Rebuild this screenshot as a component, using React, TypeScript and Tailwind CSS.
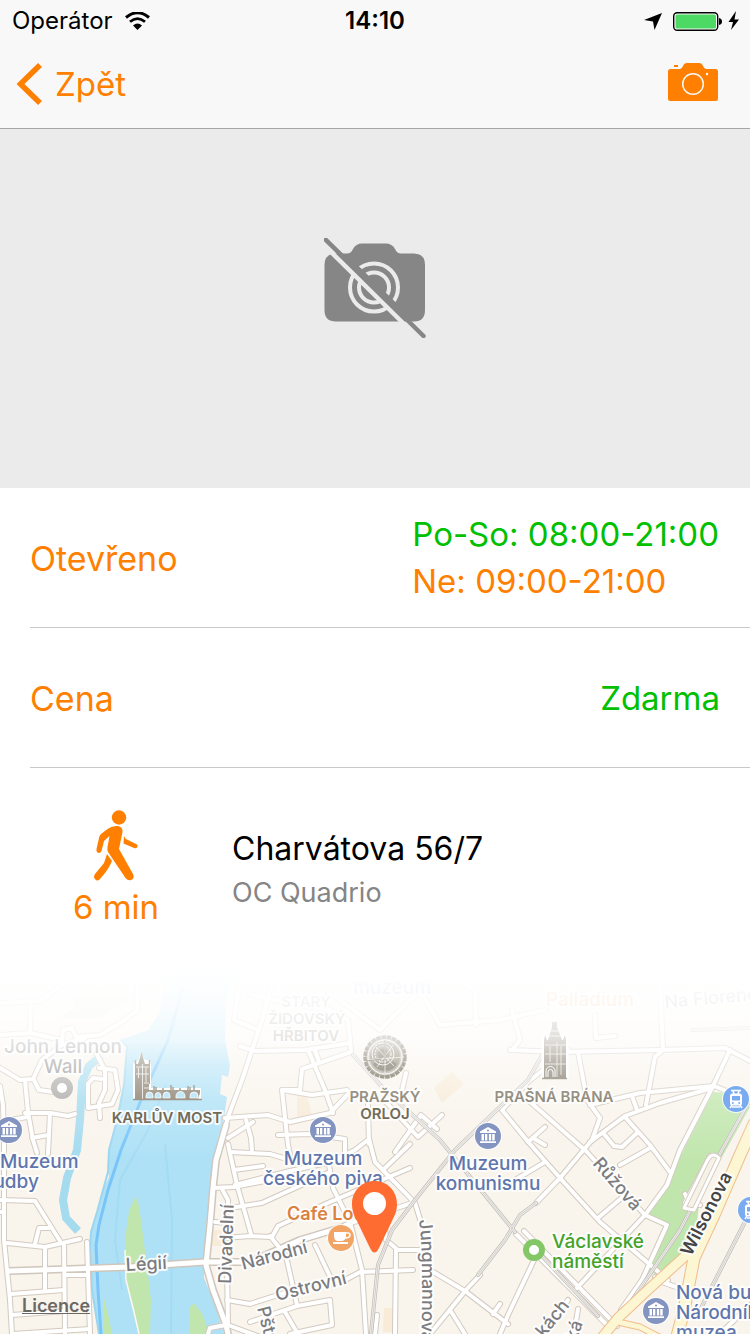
import React from "react";

const minorRoads = [
  "M0 1068 L20 1080 L33 1079 L42 1060 L62 1045 L85 1038",
  "M25 1080 L28 1112 L33 1140 L37 1153",
  "M25 1113 L50 1113 L68 1116 L75 1114",
  "M50 1113 L48 1154",
  "M32 1138 L48 1135",
  "M0 1122 L27 1117",
  "M34 1080 L39 1090 L53 1092",
  "M0 1086 L3 1105 L4 1144 L4 1240 L10 1300 L12 1334",
  "M96 1053 L105 1070 L105 1090 L99 1103 L100 1118",
  "M99 1068 L115 1070 L118 1090 L112 1104 L88 1108 L88 1084 L93 1078 L102 1079",
  "M62 1045 L63 1030 L72 1028 L76 1037 L100 1035 L125 1020 L137 1010 L138 982",
  "M0 1035 L30 1033 L62 1040",
  "M0 1003 L40 1001 L66 982",
  "M31 1002 L30 1033",
  "M0 1200 L35 1201 L60 1241",
  "M35 1244 L39 1228 L50 1228",
  "M7 1243 L45 1247 L80 1239",
  "M45 1247 L45 1290",
  "M64 1243 L65 1334",
  "M87 1242 L90 1334",
  "M11 1294 L64 1290",
  "M12 1315 L65 1311",
  "M65 1275 L88 1275",
  "M12 1334 L90 1329",
  "M0 1212 L4 1212",
  "M228 1144 L237 1185 L251 1234",
  "M213 1188 L234 1187 L270 1180",
  "M222 1189 L228 1200 L228 1212",
  "M230 1152 L270 1154 L290 1160",
  "M234 1170 L263 1166",
  "M215 1222 L230 1223",
  "M225 1238 L250 1236 L272 1237 L278 1226 L330 1202 L410 1168",
  "M227 1265 L228 1325 L260 1337",
  "M227 1300 L250 1304 L300 1288",
  "M208 1334 L210 1328 L226 1325",
  "M272 982 L262 1020 L252 1050 L242 1080 L228 1117 L218 1155",
  "M240 1046 L254 1051 L305 1050 L350 1043",
  "M351 1052 L302 1069 L300 1090 L282 1090 L288 1145 L290 1155",
  "M308 1050 L325 1090 L333 1113",
  "M315 1050 L319 1062",
  "M282 1090 L312 1095 L347 1090",
  "M225 1118 L268 1115 L290 1122 L330 1113 L350 1092",
  "M278 1135 L310 1134 L345 1139 L345 1160",
  "M246 1120 L251 1138 L252 1150",
  "M228 1138 L253 1122",
  "M240 980 L234 1020 L258 1030",
  "M252 995 L300 1005 L330 1010 L348 1020 L351 1050",
  "M340 1000 L380 1030 L420 990 L440 1025 L500 1020 L545 1010",
  "M440 970 L475 990 L476 1025",
  "M406 1073 L401 1095",
  "M368 1105 L369 1144",
  "M384 1100 L418 1137 L442 1115",
  "M395 1152 L421 1115 L437 1129",
  "M330 1162 L355 1150 L369 1139",
  "M369 1139 L375 1162 L415 1203 L425 1235",
  "M385 1168 L410 1144",
  "M235 1185 L290 1171 L340 1160",
  "M230 1208 L262 1203 L330 1172",
  "M329 1165 L333 1188 L350 1222 L362 1270 L366 1334",
  "M345 1225 L412 1203",
  "M315 1245 L334 1285",
  "M270 1236 L286 1256 L297 1305",
  "M250 1322 L297 1306 L330 1300 L332 1325 L290 1334",
  "M285 1312 L298 1334",
  "M345 1280 L360 1272 L413 1270",
  "M396 1250 L395 1334",
  "M385 1225 L386 1240 L398 1250 L420 1250",
  "M377 1315 L375 1334",
  "M430 1270 L465 1291 L508 1324",
  "M430 1334 L466 1290 L480 1275",
  "M450 1310 L465 1334",
  "M493 1314 L500 1304",
  "M510 1050 L560 1052 L660 1050 L725 1048 L752 1062",
  "M512 1010 L520 1040 L512 1050",
  "M660 985 L663 1050",
  "M595 1015 L596 1038 L615 1036",
  "M578 1052 L587 1100 L600 1118 L592 1140",
  "M663 1050 L655 1057 L646 1105",
  "M730 1050 L712 1088 L680 1150 L667 1185 L645 1215",
  "M590 1105 L640 1093 L714 1086 L750 1100",
  "M590 1142 L625 1116 L660 1103 L712 1088",
  "M568 1050 L528 1082 L502 1110 L530 1144 L560 1178 L600 1222 L668 1280",
  "M528 1100 L587 1152 L645 1215 L667 1225 L642 1280 L621 1310",
  "M632 1096 L637 1110",
  "M625 1117 L650 1145 L670 1172",
  "M604 1134 L614 1146 L622 1147 L637 1133",
  "M528 1142 L545 1127",
  "M533 1138 L545 1145",
  "M592 1140 L560 1178 L536 1203",
  "M598 1218 L625 1195",
  "M575 1290 L645 1215",
  "M620 1165 L650 1148",
  "M515 1180 L545 1162",
  "M535 1258 L508 1315 L500 1334",
  "M516 1234 L610 1328",
  "M524 1231 L617 1326",
  "M568 1300 L552 1322",
  "M578 1309 L574 1334",
  "M655 1277 L662 1282 L690 1292",
  "M685 1194 L690 1205 L700 1205",
  "M710 1156 L685 1203",
  "M720 1334 L750 1305",
];

const mainRoads = [
  "M9 1271 L130 1267 L205 1262 L250 1262 L300 1240 L350 1225",
  "M226 1125 L216 1160 L213 1188 L210 1225 L206 1265 L213 1290 L226 1325 L228 1334",
];

const rails = [
  "M353 1055 L385 1090 L440 1140 L515 1232",
  "M545 1050 L528 1080 L500 1107 L455 1150 L415 1200 L392 1230 L378 1265 L371 1334",
  "M478 1275 L505 1240 L520 1215 L536 1203",
  "M750 1100 L722 1150 L680 1230 L624 1312",
  "M750 1212 L700 1310",
  "M692 1030 L750 1028",
  "M540 1254 L598 1316",
];

type LabelProps = {
  x: number;
  y: number;
  children: React.ReactNode;
  className?: string;
  anchor?: "start" | "middle";
  rotate?: number;
};

function Label({ x, y, children, className = "fill-[#5f76ad] text-[19px] font-medium", anchor = "middle", rotate = 0 }: LabelProps) {
  return (
    <text
      x={x}
      y={y}
      textAnchor={anchor}
      transform={rotate ? `rotate(${rotate} ${x} ${y})` : undefined}
      className={className}
      stroke="#ffffff"
      strokeOpacity="0.85"
      strokeWidth="4"
      strokeLinejoin="round"
      paintOrder="stroke"
    >
      {children}
    </text>
  );
}

function MuseumMarker({ x, y }: { x: number; y: number }) {
  return (
    <g transform={`translate(${x} ${y})`}>
      <circle r="14" fill="#fff" opacity="0.8" />
      <circle r="13" fill="#8494c1" />
      <path d="M-8 -4.5 L0 -9 L8 -4.5 V-3 H-8 Z M-6.5 -2 h2.500 v6.500 h-2.500z M-3 -2 h2.300 v6.500 h-2.300z M0.900 -2 h2.300 v6.500 h-2.300z M4.200 -2 h2.500 v6.500 h-2.500z M-8 5.3 H8 V7 H-8z" fill="#fff" />
      <circle cy="-5.5" r="1" fill="#8494c1" />
    </g>
  );
}

function TramMarker({ x, y }: { x: number; y: number }) {
  return (
    <g transform={`translate(${x} ${y})`}>
      <circle r="14" fill="#fff" opacity="0.8" />
      <circle r="13" fill="#7aabf0" />
      <path d="M-5 -8.5 H5 M-3 -8 L-2 -5 M3 -8 L2 -5 M-4 6 L-6 9 M4 6 L6 9 M-4 8 H4" stroke="#fff" strokeWidth="1.5" fill="none" />
      <rect x="-6" y="-5.5" width="12" height="12" rx="2.5" fill="#fff" />
      <rect x="-4" y="-3" width="8" height="4.5" fill="#7aabf0" />
      <circle cx="-3.2" cy="4" r="1" fill="#7aabf0" />
      <circle cx="3.2" cy="4" r="1" fill="#7aabf0" />
    </g>
  );
}

function CharlesBridge() {
  return (
    <g>
      <path
        d="M134 1099 V1064 L140 1060 L141 1054 L143 1060 L150 1062 V1083 V1089 H200 V1099 Z"
        fill="#fff"
        stroke="#fff"
        strokeWidth="2"
        strokeLinejoin="round"
      />
      <path d="M135 1099 V1064 H138 L140.500 1056 L141.500 1052 L142.500 1056 L145 1064 H150 V1084 H149 V1090 H200 V1093 L198 1099 Z" fill="#857c69" />
      <path d="M135.500 1064 V1060 M149.500 1064 V1060 M141.500 1058 V1053 M154 1090 V1086 M156 1090 V1087 M163 1090 V1088 M171 1090 V1085 M173 1090 V1087 M180 1090 V1088 M188 1090 V1086 M190 1090 V1087 M194 1090 V1085" stroke="#857c69" strokeWidth="1.500" />
      <path d="M136 1067 H149 M136 1074 H149 M142.500 1064 V1099 M138.500 1068 V1078 M146 1067 V1082 M144 1083 H149 M144 1088 H149" stroke="#fff" strokeWidth="1" opacity="0.8" />
      <path d="M146 1098 v-2 a3.500 4 0 0 1 7 0 v2z M155 1098 v-2 a3 3.500 0 0 1 6 0 v2z M163 1098 v-2 a3.500 4 0 0 1 7 0 v2z M176 1098 v-2 a4.500 4.500 0 0 1 9 0 v2z M190 1098 v-2 a4 4 0 0 1 8 0 v2z" fill="#aee1f6" stroke="#fff" strokeWidth="0.8" />
      <path d="M133 1099.500 H202" stroke="#857c69" strokeWidth="1.500" />
    </g>
  );
}

function AstronomicalClock() {
  return (
    <g transform="translate(385 1057)" fill="none">
      <circle r="22" fill="#fff" />
      <circle r="20" fill="#aaa496" />
      <circle r="20" stroke="#675e4b" strokeWidth="3.5" strokeDasharray="4.500 0.800" />
      <circle r="17" stroke="#fff" strokeWidth="1" />
      <circle r="15" fill="#857c69" />
      <path d="M-12 7 A14 14 0 0 0 12 7 A14 9 0 0 0 -12 7Z" fill="#5d5441" />
      <circle cx="-2" cy="-3" r="11" stroke="#f2f0ec" strokeWidth="1" />
      <circle cx="-2" cy="-3" r="8" stroke="#d6d2c9" strokeWidth="1.5" strokeDasharray="2 1" />
      <circle cx="-2" cy="-3" r="5" fill="#675e4b" />
      <path d="M-18 3 L19 0 M0 -15 V16 M-9 -10 L9 9 M-8 10 L8 -12" stroke="#f0eee9" strokeWidth="0.8" />
      <path d="M-19 4 L-4 2 M0 -17 V3" stroke="#5d5441" strokeWidth="1" />
    </g>
  );
}

function PowderTower() {
  return (
    <g>
      <path d="M543 1078 V1039 L545 1034 L549 1038 L552 1026 H557 L561 1038 L565 1034 L567 1039 V1078Z" fill="#fff" stroke="#fff" strokeWidth="3" />
      <path d="M544 1078 V1040 L545 1035 L547 1040 H548 L552 1027 V1022 H557 V1027 L562 1040 H563 L565 1035 L566 1040 V1078Z" fill="#766d5a" />
      <path d="M545 1045 H566 M545 1054 H566 M545 1064 H566 M557 1042 V1077 M549 1031 H560 M548 1036 H561 M550 1046 V1062 M561 1046 V1075" stroke="#f4f2ee" strokeWidth="1" opacity="0.8" />
      <path d="M546 1077 V1071 A4.500 4.500 0 0 1 555 1071 V1077 M548 1077 V1072 A2.500 2.500 0 0 1 553 1072 V1077" stroke="#fff" strokeWidth="1" fill="none" />
      <path d="M542 1078.500 H567" stroke="#766d5a" strokeWidth="1.500" />
    </g>
  );
}

function CityMap() {
  const street = "fill-[#7c7c7f] text-[18px] font-medium";
  const landmark = "fill-[#726b58] text-[15px] font-semibold";
  const museum = "fill-[#5f76ad] text-[19px] font-medium";
  return (
    <svg
      viewBox="0 960 750 374"
      preserveAspectRatio="xMidYMin slice"
      className="absolute inset-0 h-full w-full"
      role="img"
      aria-label="Mapa okolí"
    >
      <defs>
        <linearGradient id="fade" x1="0" y1="960" x2="0" y2="1160" gradientUnits="userSpaceOnUse">
          <stop offset="0" stopColor="#fff" />
          <stop offset="0.1" stopColor="#fff" stopOpacity="0.98" />
          <stop offset="0.25" stopColor="#fff" stopOpacity="0.91" />
          <stop offset="0.4" stopColor="#fff" stopOpacity="0.78" />
          <stop offset="0.52" stopColor="#fff" stopOpacity="0.5" />
          <stop offset="0.7" stopColor="#fff" stopOpacity="0.22" />
          <stop offset="1" stopColor="#fff" stopOpacity="0" />
        </linearGradient>
        <path id="jungmannova" d="M419 1220 Q424 1260 421 1345" />
      </defs>

      <rect y="960" width="750" height="374" fill="#f9f4ec" />
      <path d="M72 995 L92 990 L128 980 L128 1000 L100 1018 L57 1018 L75 1008Z" fill="#e4efd6" />
      <path d="M434 1088 L440 1082 L452 1072 L464 1084 L442 1103Z M297 1096 h10 l5 20 l-15 2z M384 1308 h9 v24 h-10z M211 1230 h12 v16 h-12z" fill="#f8ebd7" />

      <path
        d="M166 960 L165 990 L158 1015 L148 1030 L120 1040 L127 1046 L124 1085 L117 1120 L109 1150 L108 1172 L109 1177 L103 1190 L97 1212 L91 1232 L90 1250 L92 1290 L99 1334 L224 1334 L215 1305 L204 1278 L204 1262 L208 1220 L212 1188 L216 1150 L224 1118 L227 1097 L220 1094 L222 1075 L228 1077 L230 1066 L225 1040 L226 1000 L240 960Z"
        fill="#aee1f6"
      />
      <path d="M120 1040 L127 1046 L124 1085 L117 1120 L109 1150 L108 1172 L103 1190 L97 1212 L91 1232 L90 1250 L92 1290 L99 1334" fill="none" stroke="#9bd6ef" strokeWidth="2" />
      <path d="M101 1056 L89 1066 L82 1082 L80 1120 L77 1150 L67 1178 L63 1200 L66 1218 L78 1231" fill="none" stroke="#a4dbef" strokeWidth="8" />
      <path d="M166 1085 L148 1130 L120 1180 L115 1240 L122 1290 M165 1144 L172 1220 L171 1334" fill="none" stroke="#a3dbf3" strokeWidth="2" />
      <path d="M183 988 L168 1040 L141 1100 L121 1150 L108 1190 L99 1225 L96 1245 L98 1290 L101 1334" fill="none" stroke="#79c5fa" strokeWidth="3" />
      <path d="M135 1197 L129 1211 L125 1240 L126 1280 L134 1312 L139 1334 H150 L151 1300 L146 1258 L141 1220 L138 1202Z M104 1298 L109 1318 L112 1334 H104Z M194 1303 L189 1308 V1334 H209 L203 1315Z" fill="#c1e6ad" />
      <path d="M125 1250 L126 1280 L134 1312 L139 1334" fill="none" stroke="#fff8ee" strokeWidth="1.500" />
      <path d="M713 1092 L729 1093 L750 1107 L722 1157 L700 1195 L695 1240 L662 1277 L648 1271 L667 1226 L646 1215 L669 1180 L686 1145Z" fill="#c1e6ad" />

      <g fill="none" strokeLinejoin="round" strokeLinecap="round">
        {minorRoads.map((d) => <path key={d} d={d} stroke="#d3cac0" strokeWidth="6" />)}
        {mainRoads.map((d) => <path key={d} d={d} stroke="#cfc6bc" strokeWidth="8" />)}
        {minorRoads.map((d) => <path key={d} d={d} stroke="#fff" strokeWidth="4" />)}
        {mainRoads.map((d) => <path key={d} d={d} stroke="#fff" strokeWidth="5" />)}
        {rails.map((d) => <path key={d} d={d} stroke="#bebcb9" strokeWidth="4" />)}
        {rails.map((d) => <path key={d} d={d} stroke="#f3f0eb" strokeWidth="2.5" />)}
        {rails.map((d) => <path key={d} d={d} stroke="#c4c2bf" strokeWidth="0.7" />)}
        <path d="M706 1163 Q712 1150 719 1158 L694 1210 L684 1208 Z" fill="#f7f2e8" stroke="#d3cac0" strokeWidth="5" />
        <path d="M706 1163 Q712 1150 719 1158 L694 1210 L684 1208 Z" stroke="#fff" strokeWidth="3" />
        <g stroke="#f0bd8b">
          <path d="M754 1124 L740 1155 L714 1215 L694 1258 L684 1310 L676 1340" strokeWidth="13" />
          <path d="M694 1248 L650 1288 L618 1318 L600 1340" strokeWidth="11" />
          <path d="M618 1322 L640 1327 L665 1340" strokeWidth="7" />
        </g>
        <g stroke="#fcf6d3">
          <path d="M754 1124 L740 1155 L714 1215 L694 1258 L684 1310 L676 1340" strokeWidth="11" />
          <path d="M694 1248 L650 1288 L618 1318 L600 1340" strokeWidth="9" />
          <path d="M618 1322 L640 1327 L665 1340" strokeWidth="5" />
        </g>
      </g>

      <CharlesBridge />
      <AstronomicalClock />
      <PowderTower />

      <g className="font-['Inter',sans-serif]">
        <Label x={392} y={994} className={museum}>muzeum</Label>
        <Label x={590} y={1006} className="fill-[#f08a2c] text-[19px] font-medium">Palladium</Label>
        <Label x={665} y={1008} anchor="start" rotate={-5} className={street}>Na Florenci</Label>
        <Label x={306} y={1007} className="fill-[#8f8c85] text-[15px] font-semibold">STARÝ</Label>
        <Label x={307} y={1024} className="fill-[#8f8c85] text-[15px] font-semibold">ŽIDOVSKÝ</Label>
        <Label x={306} y={1041} className="fill-[#8f8c85] text-[15px] font-semibold">HŘBITOV</Label>
        <Label x={63} y={1053} className="fill-[#919191] text-[19px] font-medium">John Lennon</Label>
        <Label x={63} y={1073} className="fill-[#919191] text-[19px] font-medium">Wall</Label>
        <circle cx="62" cy="1088" r="8" fill="#fff" stroke="#aaa9a6" strokeWidth="6" />
        <Label x={385} y={1102} className={landmark}>PRAŽSKÝ</Label>
        <Label x={554} y={1102} className={landmark}>PRAŠNÁ BRÁNA</Label>
      </g>

      <rect y="960" width="750" height="200" fill="url(#fade)" />

      <g className="font-['Inter',sans-serif]">
        <Label x={167} y={1123} className={landmark}>KARLŮV MOST</Label>
        <Label x={385} y={1119} className={landmark}>ORLOJ</Label>
        <MuseumMarker x={9} y={1130} />
        <MuseumMarker x={323} y={1130} />
        <MuseumMarker x={488} y={1136} />
        <MuseumMarker x={656} y={1311} />
        <TramMarker x={736} y={1099} />
        <TramMarker x={751} y={1210} />
        <Label x={0} y={1168} anchor="start">Muzeum</Label>
        <Label x={-18} y={1188} anchor="start">hudby</Label>
        <Label x={323} y={1165}>Muzeum</Label>
        <Label x={323} y={1185}>českého piva</Label>
        <Label x={488} y={1170}>Muzeum</Label>
        <Label x={488} y={1190}>komunismu</Label>
        <Label x={676} y={1299} anchor="start">Nová budova</Label>
        <Label x={676} y={1319} anchor="start">Národního</Label>
        <Label x={676} y={1339} anchor="start">muzea</Label>
        <Label x={287} y={1220} anchor="start" className="fill-[#db813e] text-[18px] font-semibold">Café Louvre</Label>
        <circle cx="341" cy="1238" r="14" fill="#fff" opacity="0.8" />
        <circle cx="341" cy="1238" r="13" fill="#f2a465" />
        <path d="M334 1232 h12 v4 q0 5 -5 5 h-3 q-4 0 -4 -5z M333 1242 h15 v2 h-15z" fill="#fff" />
        <path d="M346 1233 h2 q2 0 2 2 q0 3 -5 3" fill="none" stroke="#fff" strokeWidth="1.500" />
        <circle cx="534" cy="1250" r="8" fill="#fff" stroke="#83c766" strokeWidth="6" />
        <Label x={552} y={1248} anchor="start" className="fill-[#45a32a] text-[19px] font-medium">Václavské</Label>
        <Label x={552} y={1268} anchor="start" className="fill-[#45a32a] text-[19px] font-medium">náměstí</Label>
        <Label x={126} y={1271} anchor="start" rotate={-3} className={street}>Légií</Label>
        <Label x={231} y={1284} anchor="start" rotate={-88} className={street}>Divadelní</Label>
        <Label x={243} y={1270} anchor="start" rotate={-15} className={street}>Národní</Label>
        <Label x={277} y={1301} anchor="start" rotate={-14} className={street}>Ostrovní</Label>
        <Label x={257} y={1308} anchor="start" rotate={76} className={street}>Pštrossova</Label>
        <Label x={592} y={1164} anchor="start" rotate={49} className={street}>Růžová</Label>
        <Label x={544} y={1338} anchor="start" rotate={-51} className={street}>kách</Label>
        <Label x={576} y={1342} anchor="start" rotate={-70} className={street}>ká</Label>
        <Label x={691} y={1257} anchor="start" rotate={-63} className="fill-[#454547] text-[18px] font-semibold">Wilsonova</Label>
        <text className={street} stroke="#fff" strokeWidth="4" strokeLinejoin="round" paintOrder="stroke">
          <textPath href="#jungmannova">Jungmannova</textPath>
        </text>
      </g>

      <path d="M374.500 1181 C361.500 1181 352 1191 352 1204 C352 1211 354 1215 357 1221 L370 1248 Q374.500 1257 379 1248 L392 1221 C395 1215 397 1211 397 1204 C397 1191 387.500 1181 374.500 1181Z" fill="#ff6c31" />
      <circle cx="374.500" cy="1203.500" r="11.500" fill="#fff" />
    </svg>
  );
}

function StatusBar() {
  return (
    <div className="grid h-10 grid-cols-3 items-center px-3 pt-0.5 text-2xl text-black">
      <div className="flex items-center gap-3">
        <span>Operátor</span>
        <svg viewBox="0 0 25 18" className="h-[18px] w-[25px]" aria-hidden="true">
          <path d="M1 5.500 Q12.500 -4 24 5.500" fill="none" stroke="#000" strokeWidth="3" />
          <path d="M5 9.800 Q12.500 3.500 20 9.800" fill="none" stroke="#000" strokeWidth="2.800" />
          <path d="M8 13.500 Q12.500 9.500 17 13.500 L12.500 18Z" />
        </svg>
      </div>
      <span className="text-center text-2xl font-semibold">14:10</span>
      <div className="-mr-0.5 flex items-center justify-end">
        <svg viewBox="0 0 96 20" className="h-5 w-24" aria-label="Baterie nabitá" role="img">
          <path d="M18 2 L10.500 19 L9 10.500 L0 9 Z" />
          <rect x="29.700" y="1.700" width="44" height="17.600" rx="3.500" fill="#fff" stroke="#000" strokeWidth="1.400" />
          <rect x="31.500" y="3.500" width="40.500" height="14" rx="1.500" fill="#4cd964" />
          <path d="M75 7 q3 0.500 3 3.500 t-3 3.500z" />
          <path d="M92 0 L84.500 11 H89 L87 19 L95 8.500 H90.500 Z" />
        </svg>
      </div>
    </div>
  );
}

export default function App() {
  return (
    <div className="flex min-h-screen w-full flex-col bg-white font-['Inter',sans-serif] text-[33px] leading-10 text-[#ff8000]">
      <header className="border-b border-[#a5a5a5] bg-[#f8f8f8]">
        <StatusBar />
        <nav className="flex h-[88px] items-center justify-between pr-8 pl-4">
          <button type="button" className="flex items-center gap-[13px]">
            <svg viewBox="0 0 26 42" className="h-[42px] w-[26px]" aria-hidden="true">
              <path d="M24 2 L4.500 21 L24 40" fill="none" stroke="currentColor" strokeWidth="5.500" />
            </svg>
            <span>Zpět</span>
          </button>
          <button type="button" aria-label="Přidat fotografii" className="pb-1">
            <svg viewBox="0 0 50 38" className="h-[38px] w-[50px]">
              <path d="M2.500 6 H12 Q14 5.500 15 3 Q16 0 19 0 H31 Q34 0 35 3 Q36 5.500 38 6 H47.500 Q50 6 50 8.500 V35.500 Q50 38 47.500 38 H2.500 Q0 38 0 35.500 V8.500 Q0 6 2.500 6Z M6 2 h4 v2 h-4z" fill="currentColor" />
              <circle cx="25" cy="21" r="10.300" fill="none" stroke="#f8f8f8" strokeWidth="1.500" />
              <circle cx="39" cy="11" r="1.200" fill="#f8f8f8" />
            </svg>
          </button>
        </nav>
      </header>

      <main className="flex flex-1 flex-col">
        <div className="flex h-[359px] items-center justify-center bg-[#ebebeb] pb-[42px]">
          <svg viewBox="0 0 102 100" className="h-[100px] w-[102px]" role="img" aria-label="Bez fotografie">
            <path d="M12 15.500 H23 Q27 15.500 29 11 Q32 5.500 38 5.500 H62 Q68 5.500 71 11 Q73 15.500 77 15.500 H90 Q101 15.500 101 27 V72 Q101 83.500 90 83.500 H12 Q0.500 83.500 0.500 72 V27 Q0.500 15.500 12 15.500Z" fill="#868686" />
            <circle cx="50" cy="49.500" r="24" fill="none" stroke="#ebebeb" strokeWidth="4" />
            <circle cx="50" cy="49.500" r="15" fill="none" stroke="#ebebeb" strokeWidth="4" />
            <path d="M26 25 L75 73" stroke="#868686" strokeWidth="8" />
            <path d="M1.500 1.500 L99.500 98" stroke="#868686" strokeWidth="4.500" strokeLinecap="round" />
            <path d="M7 14 L79 85" stroke="#ebebeb" strokeWidth="4.500" />
          </svg>
        </div>

        <dl className="pl-[30px]">
          <div className="flex h-[140px] items-center justify-between border-b border-[#c8c8c8] pr-[31px]">
            <dt className="pt-0.5 text-[34px]">Otevřeno</dt>
            <dd className="leading-[47px]">
              <div className="text-[#00c000]">Po-So: 08:00-21:00</div>
              <div>Ne: 09:00-21:00</div>
            </dd>
          </div>
          <div className="flex h-[140px] items-center justify-between border-b border-[#c8c8c8] pr-[30px]">
            <dt className="pt-0.5 text-[34px]">Cena</dt>
            <dd className="text-[#00c000]">Zdarma</dd>
          </div>
        </dl>

        <section className="flex h-48 pl-[30px]">
          <div className="flex w-[172px] flex-col items-center gap-[5px] pt-10">
            <svg viewBox="0 0 44 74" className="h-[74px] w-11" aria-hidden="true">
              <circle cx="25" cy="9.500" r="7.200" fill="currentColor" />
              <path d="M13.500 21 Q18 17.500 24 18 Q29 19 28.500 24 L25 41 L39 66 Q41 71 37 72 Q34 73 31.500 70 L14 44 Q13 42 13.500 39 L15.500 28 L10 33 L7.500 43 Q6 46 3.500 44.500 Q2 44 2.500 41 L5 30 Q5 28 7 26Z" fill="currentColor" />
              <path d="M30 28 Q31 31 34 32 L41 35.500 Q44 36.500 43.500 38.500 Q43 41 40 40 L29.500 35.500Z" fill="currentColor" />
              <path d="M13 46 L18 53 Q15 61 6 71 Q3 74 1 71 Q-1 69 1 66 L10 55Z" fill="currentColor" />
            </svg>
            <p>6 min</p>
          </div>
          <div className="pt-[61px] pl-[30px]">
            <h1 className="text-[32px] text-black">Charvátova 56/7</h1>
            <p className="pt-1 text-[27px] text-[#858585]">OC Quadrio</p>
          </div>
        </section>

        <section className="relative min-h-[374px] flex-1 overflow-hidden">
          <CityMap />
          <a href="#licence" className="absolute bottom-4 left-[22px] text-[18px] leading-6 font-semibold text-[#6b6965] underline">
            Licence
          </a>
        </section>
      </main>
    </div>
  );
}
